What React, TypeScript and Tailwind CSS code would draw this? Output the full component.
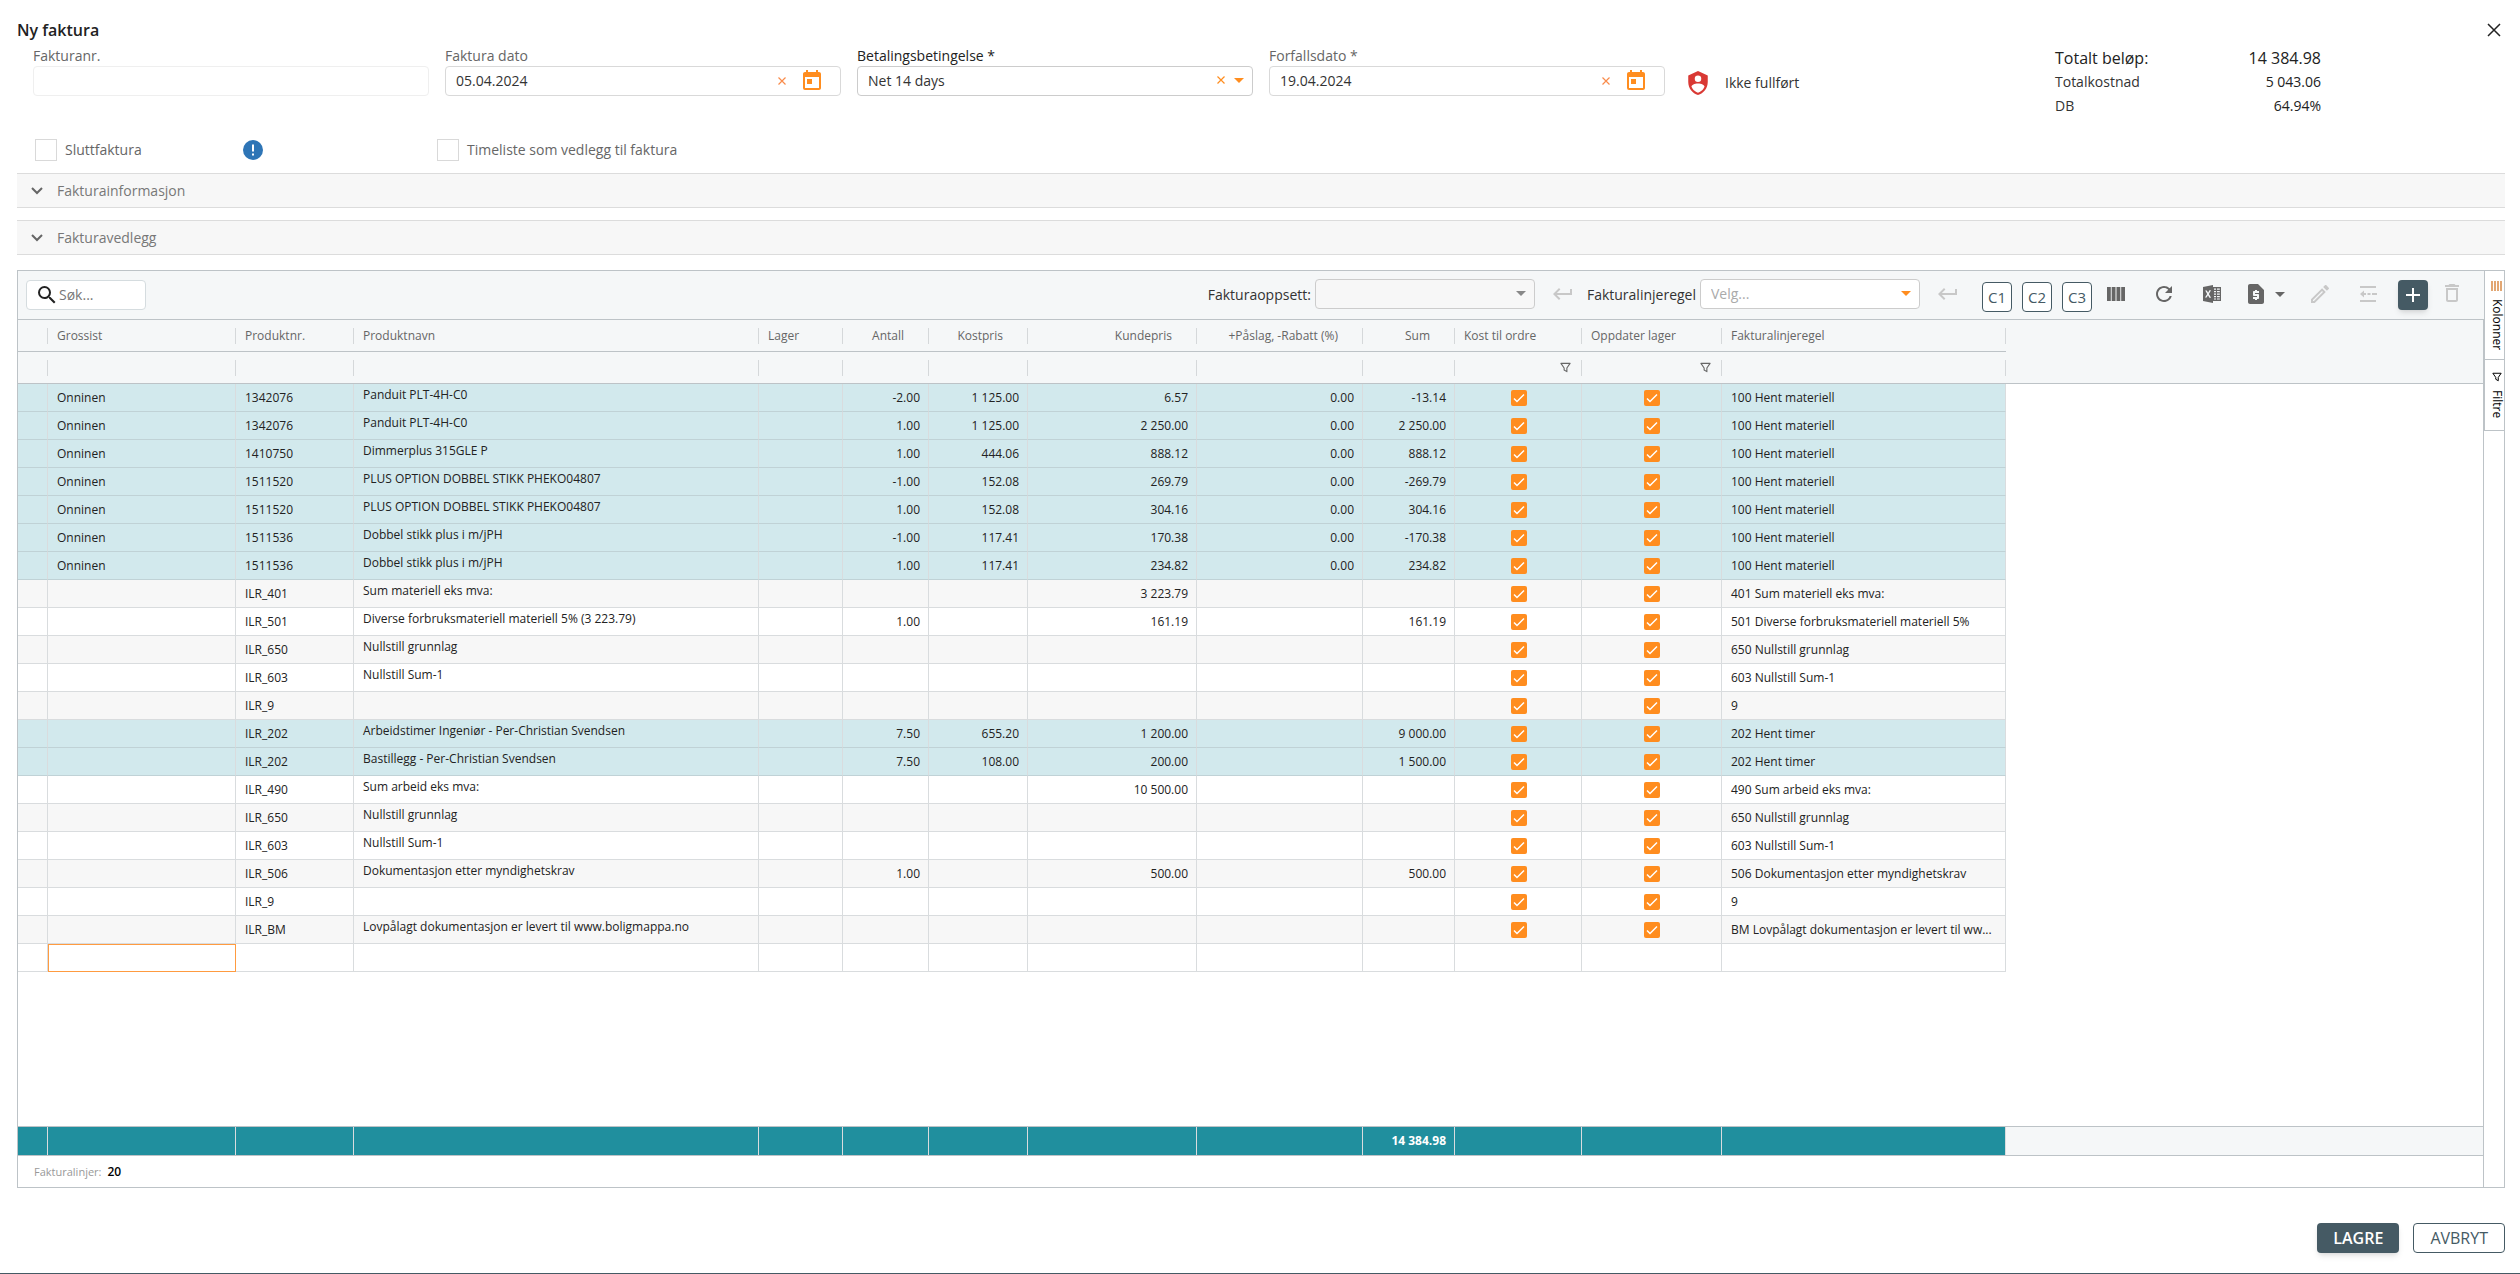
import type { ReactNode } from "react";
import {
  MdArrowDropDown,
  MdDeleteOutline,
  MdKeyboardReturn,
  MdOutlineEdit,
  MdRefresh,
  MdRequestPage,
  MdSearch,
  MdToday,
} from "react-icons/md";

type Line = {
  grossist?: string;
  nr?: string;
  navn?: string;
  antall?: string;
  kost?: string;
  kunde?: string;
  rabatt?: string;
  sum?: string;
  regel?: string;
  marked?: boolean;
};

const onninen = (nr: string, navn: string, antall: string, kost: string, kunde: string, sum: string): Line => ({
  grossist: "Onninen",
  nr,
  navn,
  antall,
  kost,
  kunde,
  rabatt: "0.00",
  sum,
  regel: "100 Hent materiell",
  marked: true,
});

const lines: Line[] = [
  onninen("1342076", "Panduit PLT-4H-C0", "-2.00", "1 125.00", "6.57", "-13.14"),
  onninen("1342076", "Panduit PLT-4H-C0", "1.00", "1 125.00", "2 250.00", "2 250.00"),
  onninen("1410750", "Dimmerplus 315GLE P", "1.00", "444.06", "888.12", "888.12"),
  onninen("1511520", "PLUS OPTION DOBBEL STIKK PHEKO04807", "-1.00", "152.08", "269.79", "-269.79"),
  onninen("1511520", "PLUS OPTION DOBBEL STIKK PHEKO04807", "1.00", "152.08", "304.16", "304.16"),
  onninen("1511536", "Dobbel stikk plus i m/jPH", "-1.00", "117.41", "170.38", "-170.38"),
  onninen("1511536", "Dobbel stikk plus i m/jPH", "1.00", "117.41", "234.82", "234.82"),
  { nr: "ILR_401", navn: "Sum materiell eks mva:", kunde: "3 223.79", regel: "401 Sum materiell eks mva:" },
  {
    nr: "ILR_501",
    navn: "Diverse forbruksmateriell materiell 5% (3 223.79)",
    antall: "1.00",
    kunde: "161.19",
    sum: "161.19",
    regel: "501 Diverse forbruksmateriell materiell 5%",
  },
  { nr: "ILR_650", navn: "Nullstill grunnlag", regel: "650 Nullstill grunnlag" },
  { nr: "ILR_603", navn: "Nullstill Sum-1", regel: "603 Nullstill Sum-1" },
  { nr: "ILR_9", regel: "9" },
  {
    nr: "ILR_202",
    navn: "Arbeidstimer Ingeniør - Per-Christian Svendsen",
    antall: "7.50",
    kost: "655.20",
    kunde: "1 200.00",
    sum: "9 000.00",
    regel: "202 Hent timer",
    marked: true,
  },
  {
    nr: "ILR_202",
    navn: "Bastillegg - Per-Christian Svendsen",
    antall: "7.50",
    kost: "108.00",
    kunde: "200.00",
    sum: "1 500.00",
    regel: "202 Hent timer",
    marked: true,
  },
  { nr: "ILR_490", navn: "Sum arbeid eks mva:", kunde: "10 500.00", regel: "490 Sum arbeid eks mva:" },
  { nr: "ILR_650", navn: "Nullstill grunnlag", regel: "650 Nullstill grunnlag" },
  { nr: "ILR_603", navn: "Nullstill Sum-1", regel: "603 Nullstill Sum-1" },
  {
    nr: "ILR_506",
    navn: "Dokumentasjon etter myndighetskrav",
    antall: "1.00",
    kunde: "500.00",
    sum: "500.00",
    regel: "506 Dokumentasjon etter myndighetskrav",
  },
  { nr: "ILR_9", regel: "9" },
  {
    nr: "ILR_BM",
    navn: "Lovpålagt dokumentasjon er levert til www.boligmappa.no",
    regel: "BM Lovpålagt dokumentasjon er levert til ww...",
  },
];

const headers: { text: string; right?: boolean; filter?: boolean }[] = [
  { text: "" },
  { text: "Grossist" },
  { text: "Produktnr." },
  { text: "Produktnavn" },
  { text: "Lager" },
  { text: "Antall", right: true },
  { text: "Kostpris", right: true },
  { text: "Kundepris", right: true },
  { text: "+Påslag, -Rabatt (%)", right: true },
  { text: "Sum", right: true },
  { text: "Kost til ordre", filter: true },
  { text: "Oppdater lager", filter: true },
  { text: "Fakturalinjeregel" },
];

function Columns() {
  return (
    <colgroup>
      <col className="w-[30px]" />
      <col className="w-[188px]" />
      <col className="w-[118px]" />
      <col className="w-[405px]" />
      <col className="w-[84px]" />
      <col className="w-[86px]" />
      <col className="w-[99px]" />
      <col className="w-[169px]" />
      <col className="w-[166px]" />
      <col className="w-[92px]" />
      <col className="w-[127px]" />
      <col className="w-[140px]" />
      <col className="w-[284px]" />
      <col />
    </colgroup>
  );
}

function FunnelIcon({ className }: { className: string }) {
  return (
    <svg viewBox="0 0 12 12" className={className} fill="none" stroke="currentColor" strokeWidth="1.2" aria-hidden="true">
      <path d="M1 1.5h10L7.5 6.5v4l-3-1.8V6.5z" strokeLinejoin="round" />
    </svg>
  );
}

function BarsIcon({ className }: { className: string }) {
  return (
    <svg viewBox="0 0 18 14" className={className} fill="currentColor" aria-hidden="true">
      <path d="M0 0h3.800v14H0zM4.700 0h3.800v14H4.700zM9.500 0h3.800v14H9.500zM14.200 0H18v14h-3.800z" />
    </svg>
  );
}

function ThinBarsIcon() {
  return (
    <svg viewBox="0 0 11 10" className="h-2.5 w-[11px] text-[#d98a45]" stroke="currentColor" aria-hidden="true">
      <path d="M1 0v10M4 0v10M7 0v10M10 0v10" strokeWidth="1.500" />
    </svg>
  );
}

function ShieldAccountIcon() {
  return (
    <svg viewBox="0 0 24 24" className="size-[26px] text-[#d93934]" fill="currentColor" aria-hidden="true">
      <path d="M12 1 3 5v6c0 5.550 3.840 10.740 9 12 5.160-1.260 9-6.450 9-12V5l-9-4m0 4a3 3 0 0 1 3 3 3 3 0 0 1-3 3 3 3 0 0 1-3-3 3 3 0 0 1 3-3m5.130 12c-1.210 1.850-3.020 3.240-5.130 3.920-2.110-.680-3.920-2.070-5.130-3.920-.340-.500-.630-1-.870-1.530 0-1.650 2.710-3 6-3s6 1.320 6 3c-.240.530-.530 1.030-.870 1.530z" />
    </svg>
  );
}

function ExcelIcon() {
  return (
    <svg viewBox="0 0 18 18" className="size-[18px]" fill="currentColor" aria-hidden="true">
      <path
        fillRule="evenodd"
        d="M0 2 10 0v18L0 16zM2.200 5.500 4.200 9l-2.200 3.500h1.600L5 10.200l1.400 2.500h1.700L5.900 9 8 5.300H6.400L5.100 7.700 3.800 5.500z"
      />
      <path
        fillRule="evenodd"
        d="M10 2h8v14h-8zM11 3.500v1.200h2V3.500zM14 3.500v1.200h2.800V3.500zM11 6v1.200h2V6zM14 6v1.200h2.800V6zM11 8.500v1.200h2V8.500zM14 8.500v1.200h2.800V8.500zM11 11v1.200h2V11zM14 11v1.200h2.800V11zM11 13.400v1.200h2v-1.200zM14 13.400v1.200h2.800v-1.200z"
      />
    </svg>
  );
}

function OutdentIcon() {
  return (
    <svg viewBox="0 0 18 16" className="h-4 w-[18px]" fill="none" stroke="currentColor" strokeWidth="2" aria-hidden="true">
      <path d="M1 1h16M1 15h16M3 8h4M8.500 8h3M13 8h5" />
      <path d="M5 4.500v7L1 8z" fill="currentColor" stroke="none" />
    </svg>
  );
}

function ClearIcon() {
  return (
    <svg viewBox="0 0 8 8" className="size-2" stroke="currentColor" fill="none" aria-hidden="true">
      <path d="M.5.5l7 7M7.500.5l-7 7" strokeWidth="1.200" />
    </svg>
  );
}

function Chevron() {
  return (
    <svg viewBox="0 0 12 8" className="h-2 w-3 text-[#666]" fill="none" stroke="currentColor" strokeWidth="2" aria-hidden="true">
      <path d="M1 1l5 5 5-5" />
    </svg>
  );
}

function CalendarField({ id, label, value }: { id: string; label: string; value: string }) {
  return (
    <div className="w-[396px]">
      <label htmlFor={id} className="block h-5 leading-5 text-[#666]">
        {label}
      </label>
      <div className="flex h-[30px] items-center rounded border border-[#d9d9d9] bg-white pr-4 pl-2.5">
        <input id={id} defaultValue={value} className="min-w-0 flex-1 text-[#333] outline-none" />
        <button aria-label="Tøm" className="mr-2.5 p-1 text-[#f98b4b]">
          <ClearIcon />
        </button>
        <button aria-label="Velg dato" className="text-[#ff8d1f]">
          <MdToday className="size-6" />
        </button>
      </div>
    </div>
  );
}

function Section({ title }: { title: string }) {
  return (
    <button className="flex h-[35px] w-full items-center gap-3.5 border-y border-[#dcdcdc] bg-[#f7f7f7] pl-3.5 text-[#777]">
      <Chevron />
      {title}
    </button>
  );
}

function Check({ label }: { label: string }) {
  return (
    <span className="mx-auto grid size-4">
      <input
        type="checkbox"
        defaultChecked
        aria-label={label}
        className="col-start-1 row-start-1 size-4 appearance-none rounded-xs bg-[#ff8d1f]"
      />
      <svg
        viewBox="0 0 16 16"
        className="pointer-events-none col-start-1 row-start-1 size-4 text-white"
        fill="none"
        stroke="currentColor"
        strokeWidth="1.500"
        aria-hidden="true"
      >
        <path d="M3 8.500l3 3 7-7" />
      </svg>
    </span>
  );
}

function IconButton({ label, className, children }: { label: string; className: string; children: ReactNode }) {
  return (
    <button aria-label={label} className={"flex items-center justify-center " + className}>
      {children}
    </button>
  );
}

function SquareButton({ children }: { children: string }) {
  return (
    <button className="mt-1 flex h-[30px] w-[30px] items-center justify-center rounded border border-[#455a64] bg-white pt-0.5 text-[15px] text-[#455a64]">
      {children}
    </button>
  );
}

function Toolbar() {
  return (
    <div className="flex h-12 items-center pr-5 pl-2 text-sm">
      <div className="flex h-[30px] w-[120px] items-center rounded border border-[#d5dcdf] bg-white pl-2">
        <MdSearch className="size-6 shrink-0 text-[#222]" />
        <input aria-label="Søk" placeholder="Søk..." className="w-20 outline-none placeholder:text-[#777]" />
      </div>
      <div className="flex flex-1 items-center justify-end">
        <label htmlFor="oppsett" className="mr-1 text-[#333]">
          Fakturaoppsett:
        </label>
        <span className="relative mb-0.5 flex">
          <select id="oppsett" className="h-[30px] w-[220px] appearance-none rounded border border-[#ccc] bg-[#f7f7f7]">
            <option></option>
          </select>
          <MdArrowDropDown className="pointer-events-none absolute top-0.5 right-0.5 size-6 text-[#888]" />
        </span>
        <IconButton label="Bruk oppsett" className="mb-0.5 ml-4 w-6 text-[#c8c8c8]">
          <MdKeyboardReturn className="size-6" />
        </IconButton>
        <label htmlFor="regel" className="ml-3 text-[#333]">
          Fakturalinjeregel
        </label>
        <span className="relative mb-0.5 ml-1 flex">
          <select
            id="regel"
            className="h-[30px] w-[220px] appearance-none rounded border border-[#ccc] bg-white pl-2.5 text-[#aaa]"
          >
            <option>Velg...</option>
          </select>
          <MdArrowDropDown className="pointer-events-none absolute top-0.5 right-0.5 size-6 text-[#ff8d1f]" />
        </span>
        <IconButton label="Bruk regel" className="mb-0.5 ml-4 w-6 text-[#c8c8c8]">
          <MdKeyboardReturn className="size-6" />
        </IconButton>
        <div className="ml-[22px] flex gap-2.5">
          <SquareButton>C1</SquareButton>
          <SquareButton>C2</SquareButton>
          <SquareButton>C3</SquareButton>
        </div>
        <IconButton label="Kolonner" className="mb-0.5 ml-3 w-6 text-[#666]">
          <BarsIcon className="h-3.5 w-[18px]" />
        </IconButton>
        <IconButton label="Oppdater" className="mb-0.5 ml-6 w-6 text-[#666]">
          <MdRefresh className="size-6" />
        </IconButton>
        <IconButton label="Eksporter til Excel" className="mb-0.5 ml-6 w-6 text-[#666]">
          <ExcelIcon />
        </IconButton>
        <IconButton label="Rapport" className="mb-0.5 ml-5 text-[#666]">
          <MdRequestPage className="size-6" />
          <MdArrowDropDown className="size-6" />
        </IconButton>
        <IconButton label="Rediger" className="mb-0.5 ml-4 w-6 text-[#c8c8c8]">
          <MdOutlineEdit className="size-6" />
        </IconButton>
        <IconButton label="Reduser innrykk" className="mb-0.5 ml-6 w-6 text-[#c8c8c8]">
          <OutdentIcon />
        </IconButton>
        <IconButton label="Ny linje" className="ml-[18px] size-[30px] rounded bg-[#455a64] text-white shadow-md">
          <svg viewBox="0 0 14 14" className="size-3.5" stroke="currentColor" strokeWidth="2" aria-hidden="true">
            <path d="M7 0v14M0 7h14" />
          </svg>
        </IconButton>
        <IconButton label="Slett" className="mb-1 ml-3 w-6 text-[#c8c8c8]">
          <MdDeleteOutline className="size-6" />
        </IconButton>
      </div>
    </div>
  );
}

function LineRow({ line, index }: { line: Line; index: number }) {
  const isNew = index === lines.length;
  const tone = line.marked ? "bg-[#d2e9ed]" : index % 2 ? "bg-[#f7f7f7]" : "bg-white";
  const edge = line.marked ? "border-b-[#c0d2d6]" : "border-b-[#d9dcde]";
  const base = "h-7 border-r border-b border-r-[#d9dcde] pr-2 pl-[9px] " + edge + " " + tone;
  const number = base + " text-right";
  return (
    <tr>
      <td className={base} />
      <td className={isNew ? "h-7 border border-[#ff9b40] bg-white" : base}>{line.grossist}</td>
      <td className={base}>{line.nr}</td>
      <td className={base + " pb-1.5 whitespace-nowrap"}>{line.navn}</td>
      <td className={base} />
      <td className={number}>{line.antall}</td>
      <td className={number}>{line.kost}</td>
      <td className={number}>{line.kunde}</td>
      <td className={number}>{line.rabatt}</td>
      <td className={number}>{line.sum}</td>
      <td className={base}>{!isNew && <Check label="Kost til ordre" />}</td>
      <td className={base}>{!isNew && <Check label="Oppdater lager" />}</td>
      <td className={base + " whitespace-nowrap"}>{line.regel}</td>
      <td />
    </tr>
  );
}

function LinesGrid() {
  return (
    <div className="flex flex-1 border border-[#bdc3c7]">
      <div className="flex min-w-0 flex-1 flex-col">
        <div className="bg-[#f5f7f8]">
          <Toolbar />
        </div>
        <div className="flex flex-1 flex-col border-t border-r border-[#bdc3c7]">
          <table className="w-full table-fixed border-separate border-spacing-0 text-xs text-[#222]">
            <Columns />
            <thead className="bg-[#f5f7f8] text-[#666]">
              <tr>
                {headers.map((h, i) => (
                  <th key={i} className="h-8 border-b border-[#bdc3c7] p-0 font-normal">
                    <div
                      className={
                        "flex h-4 items-center border-r border-[#d5d8da] whitespace-nowrap " +
                        (h.right ? "justify-end pr-6" : "pl-[9px]")
                      }
                    >
                      {h.text}
                    </div>
                  </th>
                ))}
                <th className="p-0" />
              </tr>
              <tr>
                {headers.map((h, i) => (
                  <td key={i} className="h-8 border-b border-[#bdc3c7] p-0">
                    <div className="flex h-4 items-center justify-end border-r border-[#d5d8da] pr-2.5">
                      {h.filter && (
                        <button aria-label={"Filtrer " + h.text}>
                          <FunnelIcon className="size-[11px] text-[#666]" />
                        </button>
                      )}
                    </div>
                  </td>
                ))}
                <td className="border-b border-[#bdc3c7] p-0" />
              </tr>
            </thead>
            <tbody>
              {lines.map((line, i) => (
                <LineRow key={i} line={line} index={i} />
              ))}
              <LineRow line={{}} index={lines.length} />
            </tbody>
          </table>
          <div className="flex-1" />
          <table className="w-full table-fixed border-separate border-spacing-0 border-y border-[#bdc3c7] bg-[#f5f7f8] text-xs font-bold text-white">
            <Columns />
            <tbody>
              <tr>
                {headers.map((h, i) => (
                  <td key={i} className="h-7 border-r border-[#d9dcde] bg-[#208f9e] px-2 text-right">
                    {h.text === "Sum" ? "14 384.98" : ""}
                  </td>
                ))}
                <td />
              </tr>
            </tbody>
          </table>
          <div className="flex h-[31px] items-center gap-1.5 pl-4 text-[11px] text-[#999]">
            Fakturalinjer: <span className="text-xs font-semibold text-black">20</span>
          </div>
        </div>
      </div>
      <div className="flex w-5 flex-col text-xs text-black">
        <button className="flex h-[89px] items-center gap-2 border-b border-l border-[#bdc3c7] pt-2.5 pl-1 [writing-mode:vertical-rl]">
          <ThinBarsIcon />
          Kolonner
        </button>
        <button className="flex h-[71px] items-center gap-2 border-b border-l border-[#bdc3c7] pt-3 pl-1 [writing-mode:vertical-rl]">
          <FunnelIcon className="size-2.5" />
          Filtre
        </button>
      </div>
    </div>
  );
}

export default function App() {
  return (
    <div className="flex min-h-screen flex-col border-b border-[#455a64] bg-white pr-[15px] pl-[17px] font-['Open_Sans',sans-serif] text-sm text-[#333]">
      <header className="flex h-[46px] items-center justify-between pt-3.5">
        <h1 className="text-base font-semibold text-[#222]">Ny faktura</h1>
        <button aria-label="Lukk" className="mr-1 text-[#222]">
          <svg viewBox="0 0 14 14" className="size-3.5" fill="none" stroke="currentColor" strokeWidth="1.500" aria-hidden="true">
            <path d="M1 1l12 12M13 1L1 13" />
          </svg>
        </button>
      </header>

      <div className="flex h-[93px] items-start">
        <div className="flex gap-4 pl-4">
          <div className="w-[396px]">
            <label htmlFor="fakturanr" className="block h-5 leading-5 text-[#666]">
              Fakturanr.
            </label>
            <input
              id="fakturanr"
              disabled
              className="h-[30px] w-full rounded border border-[#efefef] bg-white px-2.5"
            />
          </div>
          <CalendarField id="dato" label="Faktura dato" value="05.04.2024" />
          <div className="w-[396px]">
            <label htmlFor="betaling" className="block h-5 leading-5 text-[#222]">
              Betalingsbetingelse *
            </label>
            <div className="relative flex">
              <select
                id="betaling"
                className="h-[30px] w-full appearance-none rounded border border-[#ccc] bg-white pl-2.5 text-[#333]"
              >
                <option>Net 14 days</option>
              </select>
              <button aria-label="Tøm" className="absolute top-2.5 right-7 text-[#ff8d1f]">
                <ClearIcon />
              </button>
              <MdArrowDropDown className="pointer-events-none absolute top-0.5 right-0.5 size-6 text-[#ff8d1f]" />
            </div>
          </div>
          <CalendarField id="forfall" label="Forfallsdato *" value="19.04.2024" />
        </div>
        <div className="mt-6 ml-5 flex items-center gap-3.5">
          <ShieldAccountIcon />
          <span>Ikke fullført</span>
        </div>
        <dl className="mr-[184px] ml-auto grid w-[266px] grid-cols-2 leading-6">
          <dt className="text-base leading-6 font-medium text-[#222]">Totalt beløp:</dt>
          <dd className="text-right text-base leading-6 font-medium text-[#222]">14 384.98</dd>
          <dt>Totalkostnad</dt>
          <dd className="text-right text-[#222]">5 043.06</dd>
          <dt>DB</dt>
          <dd className="text-right text-[#222]">64.94%</dd>
        </dl>
      </div>

      <div className="flex h-[34px] items-start pl-[18px] text-[#666]">
        <label className="flex w-[208px] items-center gap-2">
          <input type="checkbox" className="size-[22px] appearance-none border border-[#d9d9d9]" />
          Sluttfaktura
        </label>
        <svg viewBox="0 0 20 20" className="mt-px mr-[174px] size-5" aria-hidden="true">
          <circle cx="10" cy="10" r="10" fill="#2e75b6" />
          <path d="M10 4.500v7M10 13.500v2" stroke="white" strokeWidth="2" />
        </svg>
        <label className="flex items-center gap-2">
          <input type="checkbox" className="size-[22px] appearance-none border border-[#d9d9d9]" />
          Timeliste som vedlegg til faktura
        </label>
      </div>

      <div className="mb-[15px] flex flex-col gap-3">
        <Section title="Fakturainformasjon" />
        <Section title="Fakturavedlegg" />
      </div>

      <LinesGrid />

      <footer className="flex h-[85px] items-center justify-end gap-3.5 pt-3.5 text-base">
        <button className="h-[30px] rounded bg-[#455a64] px-4 font-semibold text-white shadow-md">LAGRE</button>
        <button className="h-[30px] rounded border border-[#455a64] bg-white px-4 text-[#455a64]">AVBRYT</button>
      </footer>
    </div>
  );
}
